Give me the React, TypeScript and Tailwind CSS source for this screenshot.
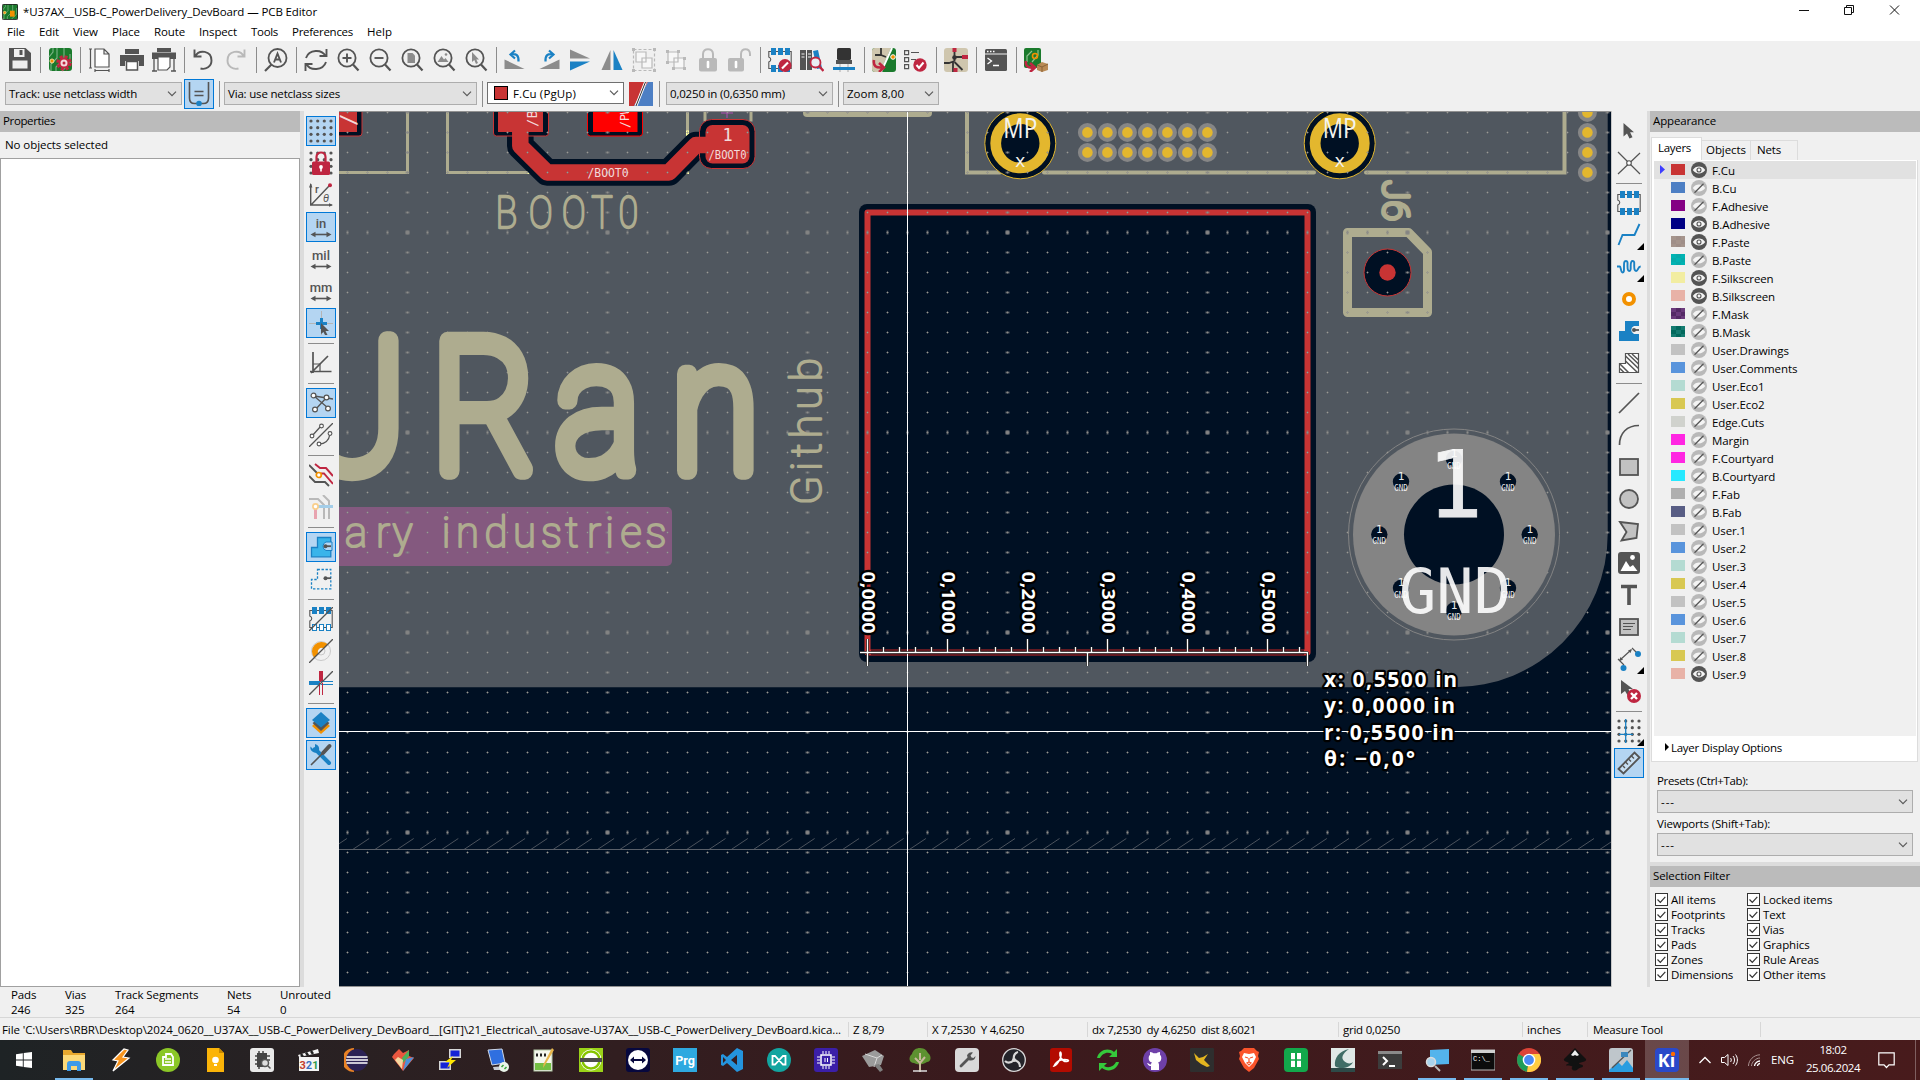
import React, { useLayoutEffect, useRef } from "react";

const D = "#545454";
const B = "#1a81c4";
const R = "#bf2641";
const O = "#f29100";
const G = "#b9b9b9";

/* Text line that can be tracked to a given width. */
function T({ w, c = "", children }: { w?: number; c?: string; children: string }) {
  const ref = useRef<HTMLSpanElement>(null);
  useLayoutEffect(() => {
    const el = ref.current;
    if (!el || !w) return;
    el.style.letterSpacing = "0px";
    const natural = el.getBoundingClientRect().width;
    el.style.letterSpacing = `${(w - natural) / children.length}px`;
  }, [w, children]);
  return (
    <span ref={ref} className={"whitespace-pre tracking-[-0.1px] " + c}>
      {children}
    </span>
  );
}

function I({ s = 24, children }: { s?: number; children: React.ReactNode }) {
  return (
    <svg width={s} height={s} viewBox="0 0 24 24" fill="none" className="block shrink-0">
      {children}
    </svg>
  );
}

/* ---------- shared icon parts ---------- */
const Lens = ({ children }: { children?: React.ReactNode }) => (
  <I>
    <circle cx="11" cy="10" r="8.600" stroke={D} strokeWidth="1.800" />
    <path d="M17 16.500l5.500 6" stroke={D} strokeWidth="2.200" />
    {children}
  </I>
);
const Cell = ({ children }: { children: React.ReactNode }) => (
  <div className="flex h-8 w-8 shrink-0 items-center justify-center">{children}</div>
);
const VSep = () => (
  <div className="flex w-2 shrink-0 justify-center">
    <div className="h-[26px] w-px bg-[#8c8c8c]" />
  </div>
);
const Footprint = ({ children }: { children?: React.ReactNode }) => (
  <I>
    <path d="M2 3.500H.8V9c2.600 1 2.600 4 0 5v6.500h22.400V3.500z" stroke={D} strokeWidth="1.100" />
    {[3, 10, 17].map((x) => (
      <g key={x} fill={B}>
        <rect x={x} y="0" width="5" height="7" />
        <rect x={x} y="17" width="5" height="7" />
      </g>
    ))}
    {children}
  </I>
);
const BoardBg = () => (
  <>
    <rect x="1" width="23" height="23" rx="3" fill="#1a7a2c" />
    <path d="M3 23V16l6-6V0M8 23v-4l8-8V0M1 9l4-5V0M14 23l8-8V6" stroke="#7fb58a" strokeWidth="1.100" />
    <circle cx="4" cy="13" r="2" fill={O} stroke="#f7dca0" />
  </>
);

const topGroups: React.ReactNode[][] = [
  [
    <I>
      <path d="M1 0h16.500L23 5v18H1z" fill={D} />
      <rect x="6" y="1" width="10.500" height="8" fill="#f0f0f0" />
      <rect x="11.500" y="2" width="3" height="5" fill={D} />
      <rect x="4.500" y="12.500" width="15" height="8" fill="#f0f0f0" />
    </I>,
  ],
  [
    <I>
      <BoardBg />
      <circle cx="16" cy="15" r="5.500" stroke={R} strokeWidth="4.600" strokeDasharray="2.600 1.700" />
      <circle cx="16" cy="15" r="4.500" fill="#f3d9de" stroke={R} strokeWidth="2" />
      <circle cx="16" cy="15" r="1.500" fill={R} />
    </I>,
  ],
  [
    <I>
      <path d="M7 1h9l5 5v13H7zM16 1v5h5" stroke={D} strokeWidth="1.200" fill="#fff" />
      <path d="M2.500 1v19M1 1h3M1 20h3M7 22.500h14M7 21v3M21 21v3" stroke={D} strokeWidth="1.200" />
    </I>,
    <I>
      <path d="M5 1h14v5H5zM0 7h24v11h-5v-5H5v5H0z" fill={D} />
      <path d="M6.500 13.500h11V22h-11z" fill="#fff" stroke={D} strokeWidth="1.500" />
    </I>,
    <I>
      <path d="M5 0h14v4H5zM0 4.500h24V11H0z" fill={D} />
      <path d="M2 11v12M22 11v12M0 23h5M19 23h5" stroke={D} strokeWidth="1.300" />
      <path d="M6 9h12v10l-3 3H6z" fill="#fff" stroke={D} strokeWidth="1.200" />
    </I>,
  ],
  [
    <I>
      <path d="M2.500 1.500v7h7M3 8.500C7 1 19.500 2.500 19.500 12.500c0 6-5.500 9.500-11 8" stroke={D} strokeWidth="1.900" />
    </I>,
    <I>
      <path d="M20.500 1.500v7h-7M20 8.500C16 1 3.500 2.500 3.500 12.500c0 6 5.500 9.500 11 8" stroke={G} strokeWidth="1.900" />
    </I>,
  ],
  [
    <I>
      <circle cx="13.500" cy="10" r="9" stroke={D} strokeWidth="1.800" />
      <path d="M7.500 16.500L1 23" stroke={D} strokeWidth="2.200" />
      <path d="M10 14.500l3.500-9 3.500 9M11 11.500h5" stroke={D} strokeWidth="1.900" />
    </I>,
  ],
  [
    <I>
      <path d="M22.500 1v7h-7M21.500 8C18 1 5 1 2 10M1.500 23v-7h7M2.500 16c3.500 7 16.500 7 19.500-2" stroke={D} strokeWidth="1.900" />
    </I>,
    <Lens>
      <path d="M11 5.500v9M6.500 10h9" stroke={D} strokeWidth="1.900" />
    </Lens>,
    <Lens>
      <path d="M6.500 10h9" stroke={D} strokeWidth="1.900" />
    </Lens>,
    <Lens>
      <path d="M7.500 5h5l2.500 2.500V15H7.500z" fill="#8c8c8c" />
    </Lens>,
    <Lens>
      <path d="M5.500 14l4-6 2.500 3.500 1.500-1.500 3 4z" fill="#8c8c8c" />
      <circle cx="14" cy="6.500" r="1.300" fill="#8c8c8c" />
    </Lens>,
    <Lens>
      <path d="M8 4v10l2.300-2 1.700 4 2-1-1.700-3.600H15z" fill="#8c8c8c" />
    </Lens>,
  ],
  [
    <I>
      <path d="M.5 11.500v9.500h20z" fill="#8c8c8c" />
      <path d="M7 6.500c5-1.500 8 1 7.500 7M11 2.500L6.500 6.500l4.500 4" stroke={B} strokeWidth="2.200" />
    </I>,
    <I>
      <path d="M23.500 11.500v9.500h-20z" fill="#8c8c8c" />
      <path d="M17 6.500c-5-1.500-8 1-7.500 7M13 2.500l4.500 4-4.500 4" stroke={B} strokeWidth="2.200" />
    </I>,
    <I>
      <path d="M2 1.500v9h20z" fill="#8c8c8c" />
      <path d="M2 22.500v-9h20z" fill={B} />
    </I>,
    <I>
      <path d="M1.500 22h9V2z" fill="#8c8c8c" />
      <path d="M22.500 22h-9V2z" fill={B} />
    </I>,
    <I>
      <rect x="1.500" y="1.500" width="21" height="21" stroke={G} strokeWidth="1.200" strokeDasharray="3 2" />
      <path d="M4 4h10v10H4zM10 10h10v10H10z" fill="#f7f7f7" stroke={G} strokeWidth="1.200" />
      <path d="M0 0h3v3H0zM21 0h3v3h-3zM0 21h3v3H0zM21 21h3v3h-3z" fill={G} />
    </I>,
    <I>
      <path d="M4 4h10v10H4zM10 10h10v10H10z" fill="#f7f7f7" stroke={G} strokeWidth="1.200" />
      <path d="M2 2h3v3H2zM13 2h3v3h-3zM2 13h3v3H2zM19 9h3v3h-3zM8 19h3v3H8zM19 19h3v3h-3z" fill={G} />
    </I>,
    <I>
      <path d="M7 10V6c0-6.500 10-6.500 10 0v4" stroke={G} strokeWidth="2" />
      <rect x="3" y="10" width="18" height="13.500" rx="2" fill={G} />
      <path d="M12 14v5" stroke="#fff" strokeWidth="2.600" strokeLinecap="round" />
    </I>,
    <I>
      <path d="M13 10V6c0-6.500 9-6.500 9 0v2" stroke={G} strokeWidth="2" />
      <rect x="0" y="10" width="16" height="13.500" rx="2" fill={G} />
      <path d="M8 14v5" stroke="#fff" strokeWidth="2.600" strokeLinecap="round" />
    </I>,
  ],
  [
    <Footprint>
      <circle cx="17" cy="17.500" r="6.500" fill={R} />
      <path d="M14 20.500l6-6" stroke="#fff" strokeWidth="2.200" />
    </Footprint>,
    <I>
      <path d="M0 2h6v20H0zM7 2h5v20H7z" fill={D} />
      <path d="M1.500 6h3M8 6h3M1.500 9h3M8 9h3" stroke="#eee" />
      <path d="M13 3l5-1 4 18-5 1z" fill={B} />
      <circle cx="15.500" cy="14.500" r="5" fill="#e9eef2" stroke={R} strokeWidth="1.800" />
      <path d="M19 18l4.500 5" stroke={R} strokeWidth="2.400" />
    </I>,
    <I>
      <rect x="5" y="0" width="14" height="12" rx="1.500" fill="#333" />
      <rect x="4" y="12" width="16" height="4" fill={D} />
      <path d="M8 16v8M16 16v8" stroke={G} strokeWidth="1.300" />
      <rect x="1" y="19" width="22" height="3" fill={B} />
    </I>,
  ],
  [
    <I>
      <rect width="24" height="24" rx="3" fill="#1a7a2c" />
      <path d="M3 0h16L8 24H3a3 3 0 01-3-3V3a3 3 0 013-3z" fill="#cfc6ae" />
      <path d="M3 7h6V0M9 7l5 2" stroke="#333" strokeWidth="1.800" />
      <path d="M20 0L9 24" stroke="#fff" strokeWidth="2" />
      <circle cx="21" cy="9" r="2.300" fill={O} stroke="#fff" strokeWidth="1" />
      <path d="M2 12c-1 6 2 8 8 7.500M7 15l5 4.500L7 24" stroke={R} strokeWidth="2.600" />
    </I>,
    <I>
      <path d="M.6 2.600h4v4h-4zM.6 9.600h4v4h-4zM.6 16.600h4v4h-4zM7 4.500h8M7 11.500h5" stroke={D} strokeWidth="1.200" />
      <circle cx="16" cy="17" r="6.700" fill={R} />
      <path d="M12.500 17l2.500 3 4.500-5.500" stroke="#fff" strokeWidth="2" />
    </I>,
  ],
  [
    <I>
      <rect width="24" height="24" rx="3" fill="#cfc6ae" />
      <path d="M10.500 3v10M10.500 9H22M10.500 13L5 15H0M9 13v11M10.500 14l8 8" stroke="#333" strokeWidth="1.800" />
      <path d="M8.500 0h4v4h-4zM18 7h6v4h-6zM9.500 20h4v4h-4z" fill={R} />
      <circle cx="10.500" cy="9.500" r="2.300" fill="#333" />
    </I>,
  ],
  [
    <I>
      <rect x="1" y="1" width="22" height="22" rx="1.500" fill={D} />
      <path d="M1 6h22" stroke="#f0f0f0" />
      <path d="M3 3.500h1.500M6 3.500h1.500M9 3.500h1.500" stroke="#fff" strokeWidth="1.500" />
      <path d="M3.500 10l4 3-4 3M9 17.500h6" stroke="#fff" strokeWidth="1.300" />
    </I>,
  ],
  [
    <I>
      <rect x="0" y="0" width="17" height="20" rx="2" fill="#1a7a2c" />
      <path d="M3 14V8l5-5M8 14l6-7V2" stroke="#8fc08f" strokeWidth="1.200" />
      <circle cx="11" cy="8" r="2.500" stroke={O} strokeWidth="1.600" />
      <path d="M2 13c-1 5 2 7 7 6.500M6 15l5 4.500L6 24" stroke={R} strokeWidth="2.600" />
      <path d="M13 17l5-3 6 2v6l-6 2-5-2z" fill="#b98a55" />
      <path d="M13 17l5 2 6-3M18 19v5" stroke="#8a6236" />
    </I>,
  ],
];

const Dots = () => (
  <>
    {[2, 8.700, 15.300, 22].map((x) =>
      [2, 8.700, 15.300, 22].map((y) => <circle key={x + "-" + y} cx={x} cy={y} r="1.600" fill={D} />)
    )}
  </>
);
const UnitIcon = ({ t }: { t: string }) => (
  <I>
    <text x="12" y="12.500" textAnchor="middle" fontSize="13" fontWeight="500" fill={D} fontFamily="Roboto">
      {t}
    </text>
    <path d="M4 19.500h16" stroke={D} strokeWidth="1.600" />
    <path d="M1.500 19.500l5-2.800v5.600zM22.500 19.500l-5-2.800v5.600z" fill={D} />
  </I>
);

type Tool = { n: React.ReactNode; on?: boolean; more?: boolean } | "sep";
const leftTools: Tool[] = [
  { n: <I><Dots /></I>, on: true },
  {
    n: (
      <I>
        <Dots />
        <path d="M7.500 11V6c0-6 9-6 9 0v5" stroke={R} strokeWidth="2.200" />
        <rect x="3" y="10.500" width="18" height="13.500" rx="1.500" fill={R} />
        <circle cx="12" cy="16" r="1.900" fill="#fff" />
        <path d="M12 16v4.500" stroke="#fff" strokeWidth="1.600" />
      </I>
    ),
  },
  {
    n: (
      <I>
        <path d="M1.700 1v21h21M2 22L20 3" stroke={D} strokeWidth="1.400" />
        <path d="M0 4.500L1.700 0l1.700 4.500zM20 20.300l4 1.700-4 1.700z" fill={D} />
        <circle cx="21" cy="2.300" r="2" fill={R} />
        <text x="6" y="10" fontSize="11" fill={D} fontFamily="Roboto" fontWeight="500">r</text>
        <text x="14" y="19" fontSize="11" fill={D} fontFamily="Roboto" fontStyle="italic">θ</text>
      </I>
    ),
  },
  { n: <UnitIcon t="in" />, on: true },
  { n: <UnitIcon t="mil" /> },
  { n: <UnitIcon t="mm" /> },
  {
    n: (
      <I>
        <path d="M12.500 0v24M0 12.500h24" stroke="#b5b5b5" strokeWidth="1" />
        <path d="M12.500 7v11M7 12.500h11" stroke={B} strokeWidth="3" />
        <path d="M12 12v11l2.500-2 2 4 2-1-2-4h3.500z" fill={D} />
      </I>
    ),
    on: true,
  },
  "sep",
  {
    n: (
      <I>
        <path d="M4 1v21M1 20.500h21.500M2 22L19 5" stroke={D} strokeWidth="1.700" />
        <path d="M4 13h7v7" stroke={D} strokeWidth="1.200" />
      </I>
    ),
  },
  "sep",
  {
    n: (
      <I>
        <path d="M5 5l14 12M18 6L6 19M5 5l13 2 6 1" stroke={D} strokeWidth="1.300" />
        {[[4.500, 4.500], [17.500, 6.500], [6, 18.500], [19, 17.500]].map(([x, y]) => (
          <circle key={x} cx={x} cy={y} r="2.400" fill="#fff" stroke={D} strokeWidth="1.200" />
        ))}
      </I>
    ),
    on: true,
  },
  {
    n: (
      <I>
        <path d="M24 0L0 24M3 13l9-10M10 21c7 0 10-4 11-10" stroke={D} strokeWidth="1.300" />
        {[[12.500, 3], [3, 13], [21, 10.500], [10, 21]].map(([x, y]) => (
          <circle key={x} cx={x} cy={y} r="1.900" fill="#fff" stroke={D} strokeWidth="1.100" />
        ))}
      </I>
    ),
  },
  "sep",
  {
    n: (
      <I>
        <path d="M6 1l5 4h6l7 8M12 10.500h3l9 10.500" stroke={R} strokeWidth="1.900" />
        <path d="M0 2l8 8M0 13l6 6h10l4 4" stroke={D} strokeWidth="1.900" />
        <circle cx="9.800" cy="12" r="2.500" fill="#fff" stroke={O} strokeWidth="1.700" />
      </I>
    ),
  },
  {
    n: (
      <I>
        <path d="M0 4h9l6 6v14M14 0l6 6v18" stroke={G} strokeWidth="2" />
        <path d="M6.500 12v12" stroke="#e8a3af" strokeWidth="3" />
        <path d="M8 11.500h16" stroke="#a3cde8" strokeWidth="3" />
        <circle cx="6.500" cy="11.500" r="2.600" fill="#fff" stroke="#f9cf8c" strokeWidth="1.700" />
      </I>
    ),
  },
  "sep",
  {
    n: (
      <I>
        <path d="M8.500 2.500h13.300v19.300H2.500V12.500h6z" fill="#39b4ea" stroke={B} strokeWidth="1.300" />
        <path d="M23 7h-6a4.500 4.500 0 000 8.500h6z" fill="#b4d8f5" stroke={B} />
        <circle cx="16.500" cy="11.200" r="2" fill={D} />
        <path d="M16.500 11.200H22" stroke={D} strokeWidth="1.800" />
      </I>
    ),
    on: true,
  },
  {
    n: (
      <I>
        <path d="M8.500 2.500h13.300v19.300H2.500V12.500h6z" stroke={B} strokeWidth="1.300" strokeDasharray="2.400 1.600" />
        <circle cx="16.500" cy="11.200" r="2" fill={D} />
        <path d="M16.500 11.200H22" stroke={D} strokeWidth="1.800" />
      </I>
    ),
  },
  "sep",
  {
    n: (
      <I>
        <path d="M2 3.500H.8V9c2.600 1 2.600 4 0 5v6.500h22.400V3.500z" stroke={D} strokeWidth="1.100" />
        {[3, 10, 17].map((x) => (
          <g key={x}>
            <rect x={x} y="0" width="5" height="7" fill={B} />
            <rect x={x + 0.500} y="17.500" width="4" height="6" fill="#fff" stroke={B} />
          </g>
        ))}
        <path d="M24 0L0 24" stroke={D} strokeWidth="1.300" />
      </I>
    ),
  },
  {
    n: (
      <I>
        <circle cx="12" cy="12" r="9.500" stroke="#c9c9c9" strokeWidth="1" />
        <circle cx="12" cy="12" r="4" stroke="#c9c9c9" />
        <path d="M5.300 18.700A9.500 9.500 0 0118.700 5.300l-4 4A4 4 0 009.300 14.700z" fill={O} />
        <path d="M24 0L0 24" stroke={D} strokeWidth="1.300" />
      </I>
    ),
  },
  {
    n: (
      <I>
        <path d="M12 0v11" stroke={R} strokeWidth="4" />
        <path d="M0 12h11" stroke={B} strokeWidth="4" />
        <path d="M12 10.500h12M12 13.500h12" stroke={B} />
        <path d="M10.500 12v12M13.500 12v12" stroke={R} />
        <path d="M24 0L0 24" stroke={D} strokeWidth="1.300" />
      </I>
    ),
  },
  "sep",
  {
    n: (
      <I>
        <path d="M3 15l9 8 9-8-3-3-6 5-6-5z" fill={O} />
        <path d="M3.500 12l8.500 8 8.500-8-3-2-5.500 5-5.500-5z" fill={D} />
        <path d="M12 1l9 8-9 7.500L3 9z" fill={B} />
      </I>
    ),
    on: true,
  },
  {
    n: (
      <I>
        <path d="M6 6l14 14" stroke={B} strokeWidth="4" strokeLinecap="round" />
        <path d="M1.500 3.500a5 5 0 008 5A5 5 0 006 1v4l-2 1z" fill={B} />
        <path d="M2 22L14 10" stroke={D} strokeWidth="1.600" />
        <path d="M14 10l6.500-7" stroke={D} strokeWidth="4" strokeLinecap="round" />
      </I>
    ),
    on: true,
  },
];

const rightTools: Tool[] = [
  {
    n: (
      <I>
        <path d="M6.500 4v13.500l3.500-3 2.500 5 3-1.300-2.400-5H17z" fill={D} />
      </I>
    ),
  },
  {
    n: (
      <I>
        <path d="M1 1l22 22M23 2L1 23" stroke={D} strokeWidth="1.200" />
        <circle cx="12" cy="12" r="2.300" fill="#fff" stroke={D} strokeWidth="1.100" />
      </I>
    ),
  },
  "sep",
  { n: <Footprint /> },
  {
    n: (
      <I>
        <path d="M1.500 22L5.500 12h12L22.500 1" stroke={B} strokeWidth="1.900" />
      </I>
    ),
    more: true,
  },
  {
    n: (
      <I>
        <path
          d="M0 11.500h3c.8 0 .8 6 2.500 6s1.500-2 1.500-6 0-5.500 2-5.500 1.500 2 1.500 5 0 5 1.700 5 1.500-2 1.500-5 0-5 2-5 1.500 2 1.500 5 0 5 2 5 1.500-4.500 4.500-4.500"
          stroke={B}
          strokeWidth="1.900"
        />
      </I>
    ),
    more: true,
  },
  {
    n: (
      <I>
        <circle cx="12" cy="12" r="5" fill="#fff" stroke={O} strokeWidth="4" />
      </I>
    ),
  },
  {
    n: (
      <I>
        <path d="M8 2h14v20H2V12h6z" fill={B} />
        <path d="M22 7h-5a4.300 4.300 0 000 8h5z" fill="#f0f0f0" />
        <circle cx="17" cy="11" r="2" fill={D} />
        <path d="M17 11h5" stroke={D} strokeWidth="1.800" />
      </I>
    ),
  },
  {
    n: (
      <I>
        <path d="M8.500 2.500h13v19h-19v-9h6z" fill="#fff" stroke={D} strokeWidth="1.200" />
        <path d="M3 13l8.500 8.500M3 17.500l4 4M8.500 10l12 11.500M8.500 5l13 12.500M11 3l10.500 10M15 3l6.500 6" stroke={D} strokeWidth="1.500" />
      </I>
    ),
  },
  "sep",
  {
    n: (
      <I>
        <path d="M2 22L22 2" stroke={D} strokeWidth="1.700" />
      </I>
    ),
  },
  {
    n: (
      <I>
        <path d="M2.500 22C2.500 10 10 2.500 22 2.500" stroke={D} strokeWidth="1.700" />
      </I>
    ),
  },
  {
    n: (
      <I>
        <rect x="3" y="4" width="18" height="16" fill="#c2c2c2" stroke={D} strokeWidth="1.800" />
      </I>
    ),
  },
  {
    n: (
      <I>
        <circle cx="12" cy="12" r="9" fill="#c2c2c2" stroke={D} strokeWidth="1.800" />
      </I>
    ),
  },
  {
    n: (
      <I>
        <path d="M3 3l18 2-1.500 14L4.500 21.500 9.500 13z" fill="#c2c2c2" stroke={D} strokeWidth="1.800" />
      </I>
    ),
  },
  {
    n: (
      <I>
        <rect x="1" y="1" width="22" height="22" rx="3" fill={D} />
        <path d="M3.500 20L9 10l4 6 3-2 4.500 6z" fill="#fff" />
        <circle cx="15.500" cy="6.500" r="2.400" fill="#fff" />
      </I>
    ),
  },
  {
    n: (
      <I>
        <path d="M4 3.500h16M12 3v19" stroke={D} strokeWidth="3.600" />
      </I>
    ),
  },
  {
    n: (
      <I>
        <rect x="3" y="4" width="18" height="16" fill="#c2c2c2" stroke={D} strokeWidth="1.800" />
        <path d="M6 8.500h12M6 11.500h10M6 14.500h8" stroke={D} strokeWidth="1.200" />
      </I>
    ),
  },
  {
    n: (
      <I>
        <path d="M3 13L14 3M1 12l6 6M15 1l6 6" stroke={D} strokeWidth="1.200" />
        <path d="M2 14l1.500-4 2.500 2.700zM15 2l-1.500 4L11 3.500z" fill={D} />
        <circle cx="21" cy="7" r="3" fill={B} />
        <circle cx="6.500" cy="21" r="3" fill={B} />
      </I>
    ),
    more: true,
  },
  {
    n: (
      <I>
        <path d="M4 1v14l4-3 3 5 3-1.500-2.500-5.500H16z" fill={D} />
        <circle cx="17" cy="17" r="7" fill={R} />
        <path d="M14 14l6 6M20 14l-6 6" stroke="#fff" strokeWidth="2.400" />
      </I>
    ),
  },
  "sep",
  {
    n: (
      <I>
        <Dots />
        <path d="M8.700 0v24M2 15.300h14" stroke={B} strokeWidth="1.300" />
      </I>
    ),
    more: true,
  },
  {
    n: (
      <I>
        <path d="M1.500 18L17.500 1.500l5 5L6.500 22.500z" fill="#c7dff3" stroke={D} strokeWidth="1.800" />
        <path d="M8 17l-2-2M11 13.500l-3-3M14 10.500l-2-2M17 7.500l-3-3" stroke={D} strokeWidth="1.400" />
      </I>
    ),
    on: true,
  },
];

const ToolColumn = ({ tools }: { tools: Tool[] }) => (
  <div className="flex w-[35px] shrink-0 flex-col items-center bg-[#f0f0f0] pt-1 pr-px">
    {tools.map((t, i) =>
      t === "sep" ? (
        <div key={i} className="flex h-2 items-center">
          <div className="h-px w-[26px] bg-[#8c8c8c]" />
        </div>
      ) : (
        <div key={i} className="flex h-8 items-center">
          <div
            className={
              t.on
                ? "relative flex h-[30px] w-[30px] items-center justify-center border border-[#0078d7] bg-[#b4d5f2]"
                : "relative flex h-[30px] w-[30px] items-center justify-center"
            }
          >
            {t.n}
            {t.more && (
              <svg className="absolute right-0 bottom-0" width="7" height="7">
                <path d="M7 0v7H0z" fill="#000" />
              </svg>
            )}
          </div>
        </div>
      )
    )}
  </div>
);

const Chevron = () => (
  <svg width="10" height="6" viewBox="0 0 10 6" className="shrink-0">
    <path d="M1 .7l4 4 4-4" fill="none" stroke="#5a5a5a" strokeWidth="1.200" />
  </svg>
);
const Combo = ({ text, w, c }: { text: string; w?: number; c: string }) => (
  <div className={"flex shrink-0 items-center justify-between border border-[#adadad] bg-[#e1e1e1] pr-1 pl-[3px] " + c}>
    <T w={w}>{text}</T>
    <Chevron />
  </div>
);

const layers: [string, string, boolean, string?][] = [
  ["F.Cu", "#c83434", true],
  ["B.Cu", "#4d7fc4", false],
  ["F.Adhesive", "#840084", false],
  ["B.Adhesive", "#000084", true],
  ["F.Paste", "#a5948c", true, "#9f8e88"],
  ["B.Paste", "#00b3b3", false, "#06aaaa"],
  ["F.Silkscreen", "#f2eda1", true],
  ["B.Silkscreen", "#e8b2a7", true],
  ["F.Mask", "#6b3a7c", false, "#552a66"],
  ["B.Mask", "#147b70", false, "#02695d"],
  ["User.Drawings", "#c2c2c2", false],
  ["User.Comments", "#5994dc", false],
  ["User.Eco1", "#b4dbd2", false],
  ["User.Eco2", "#d8c852", false],
  ["Edge.Cuts", "#d0d2cd", false],
  ["Margin", "#ff26e2", false],
  ["F.Courtyard", "#ff26e2", false],
  ["B.Courtyard", "#26e9ff", false],
  ["F.Fab", "#afafaf", false],
  ["B.Fab", "#585d84", false],
  ["User.1", "#c2c2c2", false],
  ["User.2", "#5994dc", false],
  ["User.3", "#b4dbd2", false],
  ["User.4", "#d8c852", false],
  ["User.5", "#c2c2c2", false],
  ["User.6", "#5994dc", false],
  ["User.7", "#b4dbd2", false],
  ["User.8", "#d8c852", false],
  ["User.9", "#e8b2a7", true],
];

const Eye = ({ on }: { on: boolean }) =>
  on ? (
    <svg width="16" height="16" viewBox="0 0 16 16" className="shrink-0">
      <circle cx="8" cy="8" r="8" fill={D} />
      <path d="M1.800 8c3-4.600 9.400-4.600 12.400 0-3 4.600-9.400 4.600-12.400 0z" fill="#f4f4f4" />
      <circle cx="8" cy="8" r="2" fill="#f4f4f4" stroke={D} strokeWidth="1.100" />
    </svg>
  ) : (
    <svg width="16" height="16" viewBox="0 0 16 16" className="shrink-0">
      <circle cx="8" cy="8" r="8" fill="#b9b9b9" />
      <path d="M1.800 8c3-4.600 9.400-4.600 12.400 0-3 4.600-9.400 4.600-12.400 0z" fill="#f4f4f4" />
      <path d="M3.500 12.700l9-9" stroke={D} strokeWidth="1.300" />
    </svg>
  );

/* ---------- board canvas ---------- */
const SILK = "#aeac8f";
const NAVY = "#001023";
const CU = "#c83434";
const MONO = "'DejaVu Sans Mono', monospace";

function Grid() {
  return (
    <>
      <defs>
        <pattern id="g1" x="337" y="122" width="20" height="20" patternUnits="userSpaceOnUse">
          <rect x="9" y="10" width="3" height="1" fill="#848484" opacity="0.450" />
          <rect x="10" y="9" width="1" height="3" fill="#848484" opacity="0.450" />
          <rect x="10" y="10" width="1" height="1" fill="#9a9a94" />
        </pattern>
        <pattern id="g2" x="397" y="122" width="200" height="20" patternUnits="userSpaceOnUse">
          <rect x="8.500" y="9.500" width="4" height="2" fill="#848484" opacity="0.600" />
        </pattern>
        <pattern id="g3" x="337" y="222" width="20" height="200" patternUnits="userSpaceOnUse">
          <rect x="9.500" y="8.500" width="2" height="4" fill="#848484" opacity="0.600" />
        </pattern>
        <pattern id="g4" x="397" y="222" width="200" height="200" patternUnits="userSpaceOnUse">
          <rect x="8.500" y="8.500" width="4" height="4" fill="#848484" opacity="0.850" />
        </pattern>
      </defs>
      {["g1", "g2", "g3", "g4"].map((g) => (
        <rect key={g} x="339" y="112" width="1272" height="874" fill={`url(#${g})`} />
      ))}
    </>
  );
}

const MountPad = ({ x }: { x: number }) => (
  <g>
    <circle cx={x} cy="143.300" r="35.500" fill={NAVY} stroke="#e3b72e" strokeWidth="1" />
    <circle cx={x} cy="143.300" r="24.600" fill="none" stroke="#e3b72e" strokeWidth="10.800" />
  </g>
);
const MountLabel = ({ x }: { x: number }) => (
  <g fill="#f4f4f0" fontFamily="'Open Sans'" textAnchor="middle">
    <text x={x} y="138.300" fontSize="27.500" textLength="34" lengthAdjust="spacingAndGlyphs">MP</text>
    <text x={x} y="166.500" fontSize="19">x</text>
  </g>
);

const vias: [number, number][] = [];
for (let i = 0; i < 7; i++) {
  vias.push([1087.400 + 20 * i, 132.400], [1087.400 + 20 * i, 152.400]);
}
for (let i = 0; i < 4; i++) vias.push([1587.400, 112.400 + 20 * i]);

const gndHoles: [number, number][] = [
  [1454, 459],
  [1401, 481.700],
  [1508, 481.700],
  [1379.300, 534.500],
  [1529.700, 534.500],
  [1401, 588],
  [1508, 588],
  [1454, 610.500],
];

const outlined = {
  fill: "#fff",
  stroke: "#000",
  strokeWidth: 4.400,
  strokeLinejoin: "round" as const,
  paintOrder: "stroke" as const,
};

const hatch = Array.from({ length: 59 }, (_, i) => 330.400 + i * 22.270)
  .map((x) => `M${x.toFixed(1)} 849.500l16.500-11`)
  .join("");

const rulerPath =
  "M860 652.500H1308" +
  Array.from({ length: 28 }, (_, i) => `M${867.500 + i * 16} 652V${i % 5 ? 647 : 639}`).join("") +
  "M867.500 652V666M1087.500 652V666M1307.500 652V666";

const readout: [string, number, number][] = [
  ["x: 0,5500 in", 686.500, 133],
  ["y: 0,0000 in", 713, 131],
  ["r: 0,5500 in", 739.500, 130],
  ["θ: −0,0°", 766, 91],
];

function Board() {
  return (
    <svg width="1272" height="874" viewBox="339 112 1272 874" className="block shrink-0">
      <rect x="339" y="112" width="1272" height="874" fill={NAVY} />
      <path d="M339 112H1607.700V534A153.300 153.300 0 011454.300 687.300H339z" fill="#50575f" />

      {/* silkscreen outlines */}
      <g fill="none" stroke={SILK} strokeWidth="3">
        <path d="M339 172.400H407.500V112M447.500 112V172.400H687.500V112M705 112v9.500M751 112v9.500" />
        <path d="M967 112V172.400H1000M1044 172.400H1314M1366 172.400H1564.500V112" strokeWidth="4" strokeLinecap="round" />
      </g>
      <path d="M527 172.400h12M678 172.400h9.500v-42" stroke="#ffffa3" strokeWidth="3" fill="none" />
      <rect x="803" y="100" width="129" height="17" rx="4" fill={SILK} />
      <path d="M721 113h12M727 112v6" stroke="#b04fb4" />

      {/* pads along the top edge */}
      <rect x="320" y="90" width="42" height="46" rx="3" fill={NAVY} stroke={CU} strokeWidth="1" />
      <rect x="320" y="90" width="37" height="42" fill={CU} />
      <path d="M520.300 130V146L547 172.400H669L696 145H712" fill="none" stroke={NAVY} strokeWidth="26.600" strokeLinejoin="round" />
      <rect x="493.500" y="90" width="55" height="46" rx="3" fill={NAVY} stroke={CU} strokeWidth="1" />
      <rect x="498" y="90" width="45" height="42" fill={CU} />
      <rect x="587.500" y="90" width="55" height="46" rx="3" fill={NAVY} stroke="#f00" strokeWidth="1" />
      <rect x="593" y="90" width="44.500" height="42" fill="#f00" />
      <rect x="699.500" y="119.500" width="55.500" height="49" rx="12" fill={NAVY} stroke={CU} strokeWidth="1" />
      <rect x="705.500" y="125" width="44" height="38.500" rx="7" fill={CU} />
      <path d="M520.300 130V146L547 172.400H669L696 145H712" fill="none" stroke={CU} strokeWidth="16.500" strokeLinejoin="round" />

      <rect x="329" y="507" width="343" height="59" rx="5" fill="#84597f" />

      {/* square outline */}
      <rect x="859" y="204" width="457" height="458" rx="8" fill={NAVY} />
      <rect x="867.500" y="212.500" width="440" height="440" fill="none" stroke={CU} strokeWidth="6" strokeLinejoin="round" />
      <path d="M871 652.500H1304" stroke="#641a22" strokeWidth="7" />

      {/* test point */}
      <path d="M1347.500 232.500H1408.500L1427.500 252V312.500H1347.500z" fill="none" stroke={SILK} strokeWidth="9" strokeLinejoin="round" />
      <circle cx="1387.500" cy="272.500" r="23.500" fill={NAVY} stroke={CU} strokeWidth="1" />

      <MountPad x={1020.300} />
      <MountPad x={1339.700} />
      <circle cx="1454" cy="534.500" r="105.500" fill="none" stroke="#848484" strokeWidth="1" />

      <Grid />

      <circle cx="1387.500" cy="272.500" r="8.200" fill={CU} />
      {vias.map(([x, y]) => (
        <circle key={x + "-" + y} cx={x} cy={y} r="7.400" fill="#e3b72e" stroke="#868686" strokeWidth="4.200" />
      ))}
      <circle cx="1454" cy="534.500" r="101" fill="#848484" />
      <circle cx="1454" cy="534.500" r="50" fill={NAVY} />
      {gndHoles.map(([x, y]) => (
        <circle key={x + "-" + y} cx={x} cy={y} r="8.200" fill={NAVY} />
      ))}

      {/* silkscreen text */}
      <g fill={SILK} stroke={SILK} strokeLinejoin="round" fontFamily="Roboto" fontWeight="100">
        <g transform="translate(0 228) scale(0.800 1)" fontSize="45" strokeWidth="2.300">
          <text x="633 675.800 717.300 752.500 785.500" y="0" textAnchor="middle">BOOT0</text>
        </g>
        <g transform="translate(0 470) scale(0.870 1)" fontSize="182" strokeWidth="18.500">
          <text x="404.500 556.500 687 822" y="0" textAnchor="middle">URan</text>
        </g>
        <g transform="translate(0 547)" fontSize="42" strokeWidth="2.200">
          <text x="356 383 402.500 425 446 467.500 496 524.500 551.500 572 594 609.500 631 656" y="0" textAnchor="middle">
            ary industries
          </text>
        </g>
        <text transform="translate(820.500 505) rotate(-90)" fontSize="42.500" strokeWidth="2.200" textLength="147">
          Github
        </text>
        <text transform="translate(1382.500 180) rotate(90)" fontSize="37" strokeWidth="4" textLength="41">
          J6
        </text>
      </g>

      {/* net names */}
      <g fill="#f3dada" fontFamily={MONO}>
        <text transform="translate(355.500 126) rotate(-90)" fontSize="21">/BOOT0</text>
        <text transform="translate(536.500 127) rotate(-90)" fontSize="14">/BOOT0</text>
        <text transform="translate(628.500 128) rotate(-90)" fontSize="11.500">/PWR</text>
        <text x="608" y="176.500" fontSize="12" textAnchor="middle" textLength="41" lengthAdjust="spacingAndGlyphs">/BOOT0</text>
        <text x="727.500" y="159" fontSize="12" textAnchor="middle" textLength="38" lengthAdjust="spacingAndGlyphs">/BOOT0</text>
        <text x="727.500" y="141" fontSize="17" textAnchor="middle">1</text>
      </g>
      <MountLabel x={1020.300} />
      <MountLabel x={1339.700} />
      <g fill="#fff" fontFamily={MONO} textAnchor="middle">
        {gndHoles.map(([x, y]) => (
          <g key={x + "-" + y} opacity="0.900">
            <text x={x} y={y - 2} fontSize="11">1</text>
            <text x={x} y={y + 9.500} fontSize="8" textLength="13.500" lengthAdjust="spacingAndGlyphs">GND</text>
          </g>
        ))}
        <text x="1455" y="517" fontSize="93" opacity="0.900" stroke="#fff" strokeWidth="0.800">1</text>
        <text x="1455" y="613" fontSize="63" opacity="0.900" textLength="112" lengthAdjust="spacingAndGlyphs">GND</text>
      </g>

      <path d={hatch} stroke="#4b525c" fill="none" />
      <path d="M339 849.500H1611" stroke="#5a6069" />

      {/* crosshair */}
      <path d="M339 731.500H1611M907.500 112V986" stroke="#fff" />

      {/* ruler */}
      <path d={rulerPath} stroke="#000" strokeWidth="3" opacity="0.800" />
      <path d={rulerPath} stroke="#fff" strokeWidth="1.400" />
      <g fontFamily="'Open Sans'" fontWeight="700" fontSize="18">
        {["0,0000", "0,1000", "0,2000", "0,3000", "0,4000", "0,5000"].map((s, i) => (
          <text
            key={s}
            transform={`translate(${861.500 + i * 80} 571.500) rotate(90)`}
            textLength="62"
            lengthAdjust="spacingAndGlyphs"
            {...outlined}
          >
            {s}
          </text>
        ))}
      </g>
      <g fontFamily="'Open Sans'" fontWeight="700" fontSize="21">
        {readout.map(([s, y, w]) => (
          <text key={s} x="1324" y={y} textLength={w} {...outlined}>
            {s}
          </text>
        ))}
      </g>
    </svg>
  );
}

/* ---------- taskbar icons ---------- */
const taskIcons: React.ReactNode[] = [
  <I><path d="M1 2h8l2 3h12v17H1z" fill="#e8a82e" /><path d="M1 7h22v15H1z" fill="#fcd978" /><path d="M5 23v-7c0-2 1-3 3-3h8c2 0 3 1 3 3v7h-4v-5H9v5z" fill="#3f9be8" /></I>,
  <I><path d="M15 1L4 12l5 1-5 10L20 10l-6-1 5-7z" fill="#f7941d" stroke="#fff" strokeWidth="1.200" /></I>,
  <I><circle cx="12" cy="12" r="12" fill="#8bc727" /><path d="M7 17V9h3V6h5l2 3v8z" fill="none" stroke="#fff" strokeWidth="1.800" /><path d="M9 11h6M9 14h6" stroke="#fff" strokeWidth="1.500" /></I>,
  <I><path d="M4 0h12l5 5v19H4z" fill="#fbb408" /><path d="M16 0l5 5h-5z" fill="#c98900" /><circle cx="12.500" cy="12" r="3.300" fill="#fff" /><path d="M11 17h3" stroke="#fff" strokeWidth="2" /></I>,
  <I><rect width="24" height="24" rx="3" fill="#e9e9e9" /><rect x="7" y="5" width="10" height="14" fill="#444" /><path d="M5 8h2M5 12h2M5 16h2M17 8h3M17 12h3M9 3v2M13 3v2M9 19v2" stroke="#444" strokeWidth="1.500" /><circle cx="15" cy="15" r="3.500" fill="#ddd" stroke="#555" strokeWidth="1.500" /><path d="M17.500 17.500l3 3" stroke="#555" strokeWidth="1.500" /></I>,
  <I><path d="M1 7l20-6 1 4L2 9z" fill="#f5f5f5" /><path d="M4 6l2 3M9 4.500l2 3M14 3l2 3" stroke="#222" strokeWidth="2.400" /><rect x="2" y="9" width="20" height="14" fill="#f4f4f4" /><text x="12" y="20.500" textAnchor="middle" fontSize="11" fontWeight="700" fontFamily="Roboto"><tspan fill="#c33d2c">3</tspan><tspan fill="#3a70c0">2</tspan><tspan fill="#2f9a4a">1</tspan></text></I>,
  <I><path d="M10 0a12 12 0 000 24" fill="#e98225" /><circle cx="13" cy="12" r="11" fill="#2c2255" /><path d="M2.500 9h21M2 12h22M2.500 15h21" stroke="#fff" strokeWidth="1.500" /></I>,
  <I><path d="M3 6l5-5 4 4 6-3v6l5 2-11 13L1 9z" fill="#e9573f" /><path d="M18 2l-7 8 1 5 6-7z" fill="#4bb05a" /><path d="M23 9l-8 2-3 12z" fill="#4a90d9" /><path d="M7 9l5 3-1 9-7-9z" fill="#f5d7a0" /></I>,
  <I><rect x="11" y="1" width="12" height="9" fill="#d7d7d7" /><rect x="12.500" y="2.500" width="9" height="6" fill="#1522d8" /><rect x="1" y="13" width="12" height="9" fill="#d7d7d7" /><rect x="2.500" y="14.500" width="9" height="6" fill="#1522d8" /><path d="M15 8l-8 6h5l-3 6 9-8h-5z" fill="#ffe600" /></I>,
  <I><path d="M3 2l14-1 3 14-13 2z" fill="#2f6fe0" stroke="#cfd8e6" /><path d="M8 19l12-1 2 4H9z" fill="#c8ccd2" /><circle cx="19" cy="19" r="5" fill="#e9f4e9" /><path d="M16.500 19l2-2M19.500 21l2-2" stroke="#37a33c" strokeWidth="1.500" /></I>,
  <I><rect x="2" y="2" width="18" height="21" fill="#f4f7ee" stroke="#b5c9a8" strokeWidth="1" /><path d="M4 7h2M8 7h2M12 7h2" stroke="#222" strokeWidth="3" /><rect x="3" y="15" width="16" height="7" fill="#73bf43" /><path d="M22 2l-9 15-2 3 .5-4L20 0z" fill="#e8b64c" /></I>,
  <I><rect width="24" height="24" fill="#9bd318" /><circle cx="12" cy="12" r="10.500" fill="#fff" /><circle cx="12" cy="12" r="8.500" stroke="#86c500" strokeWidth="2.500" fill="#fff" /><rect x="1" y="10" width="22" height="4" fill="#4d4d4d" /></I>,
  <I><rect width="24" height="24" rx="3" fill="#07083e" /><circle cx="12" cy="12" r="10" fill="#fff" /><path d="M4 12l4-3.500v2.500h8V8.500l4 3.500-4 3.500V13H8v2.500z" fill="#07083e" /></I>,
  <I><rect width="24" height="24" fill="#2ea9e0" /><text x="12" y="16.500" textAnchor="middle" fontSize="12.500" fontWeight="700" fill="#fff" fontFamily="Roboto">Prg</text></I>,
  <I><path d="M17 0l6 3v18l-6 3-10-9-4 3-2-1v-10l2-1 4 3zM17 7l-6 5 6 5zM3 9v6l3-3z" fill="#2494dd" fillRule="evenodd" /></I>,
  <I><circle cx="12" cy="12" r="12" fill="#12a5a0" /><path d="M5.500 16.500V8H8l8 8.500h2.500V8H16L8 16.500z" stroke="#fff" strokeWidth="1.800" fill="none" /></I>,
  <I><rect width="24" height="24" rx="3" fill="#3b1fa8" /><rect x="7" y="7" width="10" height="10" fill="none" stroke="#fff" strokeWidth="1.500" /><path d="M9 3v3M12 3v3M15 3v3M9 18v3M12 18v3M15 18v3M3 9h3M3 12h3M3 15h3M18 9h3M18 12h3M18 15h3M11 10v4M13.500 10v4" stroke="#fff" /></I>,
  <I><path d="M1 8l13-6 9 6-3 9-12 2z" fill="#9b9b9b" /><path d="M4 6l12 4 5-3M16 10l-3 9" stroke="#d9d9d9" fill="none" /><path d="M13 17l5-1 4 6-3 2z" fill="#7f7f7f" /></I>,
  <I><path d="M12 0c5 0 7 3 8 5 4 3 3 9-1 9-4 3-10 3-13 1C1 15 0 9 4 6c1-4 4-6 8-6z" fill="#5d9130" /><path d="M12 24v-9l-5-5M12 15l5-6M12 12V5" stroke="#c7b89a" strokeWidth="2" fill="none" /><path d="M5 23h14" stroke="#ddd" strokeWidth="1.500" /></I>,
  <I><rect width="24" height="24" rx="4" fill="#d9d9d9" /><path d="M6 18l8-8" stroke="#555" strokeWidth="2.800" strokeLinecap="round" /><path d="M12 7.500a4.500 4.500 0 016-3l-2.500 3 1 2 2 .5 2-2c0 4-4 5.500-7 4z" fill="#555" /></I>,
  <I><circle cx="12" cy="12" r="11.300" fill="#24242a" stroke="#d8d8d8" strokeWidth="1.300" /><path d="M12 12c-1-5 1-7 4-8M12 12c5 1 6 4 6 7M12 12c-4 4-7 3-9 1" stroke="#d8d8d8" strokeWidth="2.200" fill="none" /><circle cx="12" cy="12" r="2" fill="#d8d8d8" /></I>,
  <I><rect x="1" width="22" height="24" rx="3" fill="#b30b00" /><path d="M5 18c4-1 8-10 7-13s-2 2 0 5 5 4 7 3-3-2-7-1-6 4-7 6z" fill="none" stroke="#fff" strokeWidth="1.500" /></I>,
  <I><path d="M21 1v8h-8l3-3C11 3 6 6 4 10H1C3 2 12-1 18 4z" fill="#35c93b" /><path d="M3 23v-8h8l-3 3c5 3 10 0 12-4h3c-2 8-11 11-17 6z" fill="#35c93b" /></I>,
  <I><circle cx="12" cy="12" r="12" fill="#6e40a8" /><path d="M8 22v-4c-3 0-3-2-4-3 2 0 2 2 4 1.500 0-1 .5-1.500 1-2C5 14 5 8 7 7V4c2 0 3 1 3.500 1.300h3C14 5 15 4 17 4v3c2 1 2 7-2 7.500.8.700 1 1.500 1 2.500v5z" fill="#fff" /></I>,
  <I><rect width="24" height="24" rx="1" fill="#2e2e2e" /><path d="M4 5l5 5 4-1 5-3-4 6 6 6-3 1-6-3-5-4z" fill="#e3b51f" /></I>,
  <I><path d="M7 0h10l3 3 2 1-1 4 1 3-5 9-5 4-5-4-5-9 1-3-1-4 2-1z" fill="#fb542b" /><path d="M7 5l5 1 5-1 2 4-3 6-4 4-4-4-3-6z" fill="#fff" /><path d="M8 9l3 1M16 9l-3 1M12 10v4l-2 1 2 2 2-2-2-1" stroke="#fb542b" strokeWidth="1.200" fill="none" /></I>,
  <I><rect width="24" height="24" rx="4" fill="#12a84b" /><path d="M7 5h4v14H7zM13 5h4v14h-4z" fill="#fff" /><path d="M7 12h4M13 12h4" stroke="#12a84b" strokeWidth="1.300" /></I>,
  <I><rect width="24" height="24" fill="#dfe8e6" /><path d="M4 18C3 10 8 3 18 1c-7 5-8 9-5 12s7 3 9 1c-2 6-14 8-18 4z" fill="#3f6d66" /><path d="M0 20h24v4H0z" fill="#2d4a48" /></I>,
  <I><rect y="3" width="24" height="18" fill="#3c3c3c" /><rect y="3" width="24" height="3" fill="#8a8a8a" /><path d="M5 9l4 4-4 4M11 18h6" stroke="#fff" strokeWidth="2" fill="none" /></I>,
  <I><path d="M5 2l19-1v15l-19 1z" fill="#54b4ec" /><circle cx="6" cy="14" r="4.500" fill="#a9d3ec" stroke="#dcdcdc" strokeWidth="1.500" /><path d="M10 18l5 5" stroke="#b9b9b9" strokeWidth="2" /></I>,
  <I><rect y="2" width="24" height="20" fill="#0c0c0c" stroke="#bbb" /><rect y="2" width="24" height="3" fill="#d0d0d0" /><text x="2" y="13" fontSize="7" fill="#fff" fontFamily="Liberation Mono">C:\_</text></I>,
  <I><circle cx="12" cy="12" r="12" fill="#dc4437" /><path d="M12 12L1.600 6A12 12 0 0010 23.800z" fill="#1f9d58" /><path d="M12 12l-2 11.800A12 12 0 0022.400 6H12z" fill="#ffcd42" /><circle cx="12" cy="12" r="5.600" fill="#4a8af4" stroke="#fff" strokeWidth="1.400" /></I>,
  <I><path d="M12 0l11 11c1 3-5 3-7 4 0 2 4 1 4 3s-3 1-5 3-5 2-6 0 2-2-1-3-5 0-5-1 3-1 3-2-6-1-5-4z" fill="#111" /><path d="M12 2l4 5-2 1-2-1-2 1-2-1z" fill="#eee" /></I>,
  <I><rect width="24" height="24" rx="3" fill="#bfc6cb" /><path d="M0 22l9-8 4 4 5-6 6 8v4H0z" fill="#2a9de0" /><path d="M3 20L22 2" stroke="#555" strokeWidth="1.300" /><rect x="12" y="4" width="7" height="5" fill="#3c87bd" /></I>,
  <I><rect width="24" height="24" rx="4" fill="#2a49c9" /><text x="11.500" y="19" textAnchor="middle" fontSize="18" fontWeight="700" fill="#fff" fontFamily="Open Sans">Ki</text><circle cx="18" cy="6" r="2.200" fill="#ff6a00" /></I>,
];

const stats: [string, string, string][] = [
  ["Pads", "246", "w-[54px]"],
  ["Vias", "325", "w-[50px]"],
  ["Track Segments", "264", "w-[112px]"],
  ["Nets", "54", "w-[53px]"],
  ["Unrouted", "0", "w-[60px]"],
];

const filters: [string, string][] = [
  ["All items", "Locked items"],
  ["Footprints", "Text"],
  ["Tracks", "Vias"],
  ["Pads", "Graphics"],
  ["Zones", "Rule Areas"],
  ["Dimensions", "Other items"],
];
const Check = ({ t }: { t: string }) => (
  <div className="flex h-[15px] w-[92px] items-center gap-[3px]">
    <svg width="13" height="13" viewBox="0 0 13 13" className="shrink-0">
      <rect x="0.500" y="0.500" width="12" height="12" fill="#fff" stroke="#333" />
      <path d="M2.500 6.500l2.800 2.800 5-5.500" fill="none" stroke="#333" strokeWidth="1.200" />
    </svg>
    <T>{t}</T>
  </div>
);

const menus: [string, number, string][] = [
  ["File", 18, "w-[32px]"],
  ["Edit", 20, "w-[34px]"],
  ["View", 25, "w-[39px]"],
  ["Place", 28, "w-[42px]"],
  ["Route", 31, "w-[45px]"],
  ["Inspect", 38, "w-[52px]"],
  ["Tools", 27, "w-[41px]"],
  ["Preferences", 61, "w-[75px]"],
  ["Help", 25, "w-[38px]"],
];

export default function App() {
  return (
    <div className="flex h-[1080px] w-[1920px] flex-col overflow-hidden bg-[#f0f0f0] font-['Open_Sans',sans-serif] text-[11.5px] leading-[15px] text-black">
      {/* title bar */}
      <div className="flex h-[23px] shrink-0 items-center bg-white pl-0.5">
        <svg width="16" height="16" viewBox="0 0 24 24" fill="none">
          <BoardBg />
          <rect x="0.500" y="0.500" width="23" height="23" rx="2" stroke="#222" strokeWidth="1.500" />
          <rect x="12" y="10" width="7" height="9" fill={O} />
        </svg>
        <div className="ml-[5px] grow">
          <T w={294}>*U37AX__USB-C_PowerDelivery_DevBoard — PCB Editor</T>
        </div>
        <svg width="110" height="12" viewBox="0 0 110 12" fill="none" stroke="#111" className="mr-[15px] mb-1">
          <path d="M4 6.500h10" />
          <path d="M49.500 3.500h7v7h-7zM51.500 3.500v-2h7v7h-2" />
          <path d="M95 1.500l9 9M104 1.500l-9 9" />
        </svg>
      </div>
      {/* menu bar */}
      <div className="flex h-[18px] shrink-0 items-start bg-white pt-px pl-[7px]">
        {menus.map(([m, w, c]) => (
          <div key={m} className={c}>
            <T w={w}>{m}</T>
          </div>
        ))}
      </div>
      {/* main toolbar */}
      <div className="flex h-[38px] shrink-0 items-center pl-1">
        {topGroups.map((g, i) => (
          <React.Fragment key={i}>
            {i > 0 && <VSep />}
            {g.map((n, j) => (
              <Cell key={j}>{n}</Cell>
            ))}
          </React.Fragment>
        ))}
      </div>
      {/* settings toolbar */}
      <div className="flex h-8 shrink-0 items-start pl-[5px]">
        <Combo text="Track: use netclass width" w={128} c="mt-[3px] h-[23px] w-[177px]" />
        <div className="ml-0.5 flex h-[30px] w-[30px] items-center justify-center border border-[#0078d7] bg-[#b4d5f2]">
          <I>
            <path d="M2.500 0v16c0 5 3 5.500 5 5.500h9c2 0 5-.5 5-5.500V0" stroke={D} strokeWidth="1.600" />
            <path d="M7.500 9.500h9M7.500 13.500h9" stroke={D} strokeWidth="1.300" />
            <circle cx="12" cy="21.500" r="2.800" fill={B} />
          </I>
        </div>
        <div className="mt-0.5 flex w-[10px] justify-center"><div className="h-[26px] w-px bg-[#8c8c8c]" /></div>
        <Combo text="Via: use netclass sizes" w={112} c="mt-[3px] h-[23px] w-[253px]" />
        <div className="mt-0.5 flex w-[10px] justify-center"><div className="h-[26px] w-px bg-[#8c8c8c]" /></div>
        <div className="mt-[3px] flex h-[22px] w-[137px] items-center border border-[#707070] bg-white pr-1 pl-1.5">
          <div className="mr-[5px] h-[14px] w-[14px] border border-black bg-[#c83434]" />
          <div className="grow">
            <T w={63}>F.Cu (PgUp)</T>
          </div>
          <Chevron />
        </div>
        <svg width="24" height="24" viewBox="0 0 24 24" className="mt-[3px] ml-[5px]">
          <path d="M0 0h19L5 24H0z" fill={CU} />
          <path d="M19 0h5v24H5z" fill="#4d7fc4" />
          <path d="M16.500 0L7 24" stroke="#fff" strokeWidth="2.800" />
          <path d="M16.500 0L7 24" stroke="#333" strokeWidth="1" />
        </svg>
        <div className="mt-0.5 flex w-[13px] justify-center"><div className="h-[26px] w-px bg-[#8c8c8c]" /></div>
        <Combo text="0,0250 in (0,6350 mm)" w={115} c="mt-[3px] h-[23px] w-[167px]" />
        <div className="mt-0.5 flex w-[10px] justify-center"><div className="h-[26px] w-px bg-[#8c8c8c]" /></div>
        <Combo text="Zoom 8,00" w={57} c="mt-[3px] h-[23px] w-[96px]" />
      </div>

      {/* work area */}
      <div className="flex h-[876px] shrink-0">
        <div className="flex w-[300px] shrink-0 flex-col">
          <div className="h-[21px] bg-[#bbbbbb] pt-[2px] pl-[3px]">
            <T w={52}>Properties</T>
          </div>
          <div className="h-[26px] pt-[5px] pl-[5px]">
            <T w={103}>No objects selected</T>
          </div>
          <div className="grow border border-[#a0a0a0] bg-white" />
        </div>
        <div className="w-[4px] shrink-0 bg-[#dcdcdc]" />
        <ToolColumn tools={leftTools} />
        <div className="w-[1272px] shrink-0 border-y border-[#909090]">
          <Board />
        </div>
        <div className="w-px shrink-0 bg-[#c8c8c8]" />
        <ToolColumn tools={rightTools} />
        <div className="w-[3px] shrink-0 bg-[#dcdcdc]" />
        {/* appearance */}
        <div className="flex w-[270px] shrink-0 flex-col">
          <div className="h-[21px] shrink-0 bg-[#bbbbbb] pt-[2px] pl-[3px]">
            <T w={63}>Appearance</T>
          </div>
          <div className="flex h-[28px] shrink-0 items-end pl-px">
            <div className="h-[23px] w-[51px] border border-b-0 border-[#dcdcdc] bg-white pt-[2px] pl-1.5">
              <T w={33}>Layers</T>
            </div>
            <div className="h-[20px] w-[49px] border-t border-r border-[#dcdcdc] pt-px pl-1">
              <T w={40}>Objects</T>
            </div>
            <div className="h-[20px] w-[47px] border-t border-r border-[#dcdcdc] pt-px pl-1.5">
              <T w={24}>Nets</T>
            </div>
          </div>
          <div className="ml-px flex h-[602px] w-[267px] shrink-0 flex-col border border-t-0 border-[#dcdcdc] bg-white pt-px">
            <div className="ml-[2px] h-[575px] w-[262px] bg-[#f0f0f0]">
              {layers.map(([name, col, on, alt], i) => (
                <div
                  key={name}
                  className={i === 0 ? "flex h-[18px] items-center bg-[#e1e1e1] pl-1.5" : "flex h-[18px] items-center pl-1.5"}
                >
                  <svg width="11" height="10" className="shrink-0">
                    {i === 0 && <path d="M0 0l5 4.500L0 9z" fill="#3d3dff" />}
                  </svg>
                  <svg width="14" height="11" className="mb-px shrink-0">
                    <rect width="14" height="11" fill={col} />
                    {alt && <path d="M5 0h5v4H5zM0 4h5v4H0zM10 4h4v4h-4zM5 8h5v3H5z" fill={alt} />}
                  </svg>
                  <div className="mr-[5px] ml-1.5">
                    <Eye on={on} />
                  </div>
                  <T>{name}</T>
                </div>
              ))}
            </div>
            <div className="flex h-[23px] items-center pl-[13px]">
              <svg width="6" height="8" className="mb-px">
                <path d="M0 0l4 4-4 4z" fill="#000" />
              </svg>
              <T w={111}>Layer Display Options</T>
            </div>
          </div>
          <div className="mt-[11px] pl-[7px]">
            <T w={91}>Presets (Ctrl+Tab):</T>
          </div>
          <Combo text="---" w={14} c="mt-[2px] ml-[7px] h-[23px] w-[256px]" />
          <div className="mt-[3px] pl-[7px]">
            <T w={113}>Viewports (Shift+Tab):</T>
          </div>
          <Combo text="---" w={14} c="mt-[2px] ml-[7px] h-[23px] w-[256px]" />
          <div className="mt-[6px] h-[4px] shrink-0 bg-[#dcdcdc]" />
          <div className="h-[21px] shrink-0 bg-[#bbbbbb] pt-[2px] pl-[3px]">
            <T w={77}>Selection Filter</T>
          </div>
          <div className="mt-[5px] ml-[5px] flex flex-col">
            {filters.map(([a, b]) => (
              <div key={a} className="flex">
                <Check t={a} />
                <Check t={b} />
              </div>
            ))}
          </div>
        </div>
      </div>

      {/* board statistics */}
      <div className="flex h-[31px] shrink-0 border-b border-[#d7d7d7] pl-[11px]">
        {stats.map(([a, b, c]) => (
          <div key={a} className={"flex flex-col " + c}>
            <T>{a}</T>
            <T>{b}</T>
          </div>
        ))}
      </div>
      {/* status bar */}
      <div className="flex h-[22px] shrink-0 items-center">
        <div className="w-[849px] border-r border-[#d7d7d7] pl-[2px]">
          <T w={839}>File 'C:\Users\RBR\Desktop\2024_0620__U37AX__USB-C_PowerDelivery_DevBoard__[GIT]\21_Electrical\_autosave-U37AX__USB-C_PowerDelivery_DevBoard.kica...</T>
        </div>
        <div className="w-[79px] border-r border-[#d7d7d7] pl-1"><T w={31}>Z 8,79</T></div>
        <div className="w-[160px] border-r border-[#d7d7d7] pl-1"><T w={92}>X 7,2530  Y 4,6250</T></div>
        <div className="w-[251px] border-r border-[#d7d7d7] pl-1"><T w={164}>dx 7,2530  dy 4,6250  dist 8,6021</T></div>
        <div className="w-[184px] border-r border-[#d7d7d7] pl-1"><T w={57}>grid 0,0250</T></div>
        <div className="w-[65px] border-r border-[#d7d7d7] pl-1"><T w={34}>inches</T></div>
        <div className="w-[173px] border-r border-[#d7d7d7] pl-[5px]"><T w={70}>Measure Tool</T></div>
      </div>

      {/* taskbar */}
      <div className="flex h-[40px] shrink-0 items-center bg-linear-to-r from-[#1e2325] via-[#3a1a1d] to-[#481b1c] text-white">
        <div className="flex w-[47px] justify-center">
          <svg width="16" height="16" viewBox="0 0 16 16">
            <path d="M0 2.200L6.800 1.200v6.300H0zM7.700 1.100L16 0v7.500H7.700zM0 8.400h6.800v6.400L0 13.800zM7.700 8.400H16V16l-8.300-1.100z" fill="#fff" />
          </svg>
        </div>
        <div className="ml-[3px] flex h-full w-[1640px] shrink-0">
          {taskIcons.map((n, i) => (
            <div key={i} className={i < 30 ? "flex h-full w-[47px] shrink-0 justify-center" : "flex h-full w-[46px] shrink-0 justify-center"}>
              <div
                className={
                  i === 34
                    ? "flex h-full w-[44px] items-center justify-center border-b-2 border-[#76b9ed] bg-white/20 pt-0.5"
                    : i === 0 || i > 28
                      ? "flex h-full w-[38px] items-center justify-center border-b-2 border-[#76b9ed] pt-0.5"
                      : "flex h-full w-[38px] items-center justify-center"
                }
              >
                {n}
              </div>
            </div>
          ))}
        </div>
        <div className="flex grow items-center pl-[9px]">
          <svg width="12" height="8" viewBox="0 0 12 8" fill="none" stroke="#fff" strokeWidth="1.300">
            <path d="M.5 7L6 1.500 11.500 7" />
          </svg>
          <svg width="17" height="14" viewBox="0 0 17 14" fill="none" stroke="#fff" className="ml-[10px]">
            <path d="M.5 4.500h3l3.500-3v11l-3.500-3h-3zM9.500 5c1 1 1 3 0 4M12 3c2 2 2 6 0 8M14.500 1.500c2.500 3 2.500 8 0 11" />
          </svg>
          <svg width="13" height="13" viewBox="0 0 13 13" fill="none" className="ml-[10px]">
            <path d="M.5 12C.5 6 6 .8 12 .8M3.500 12C3.500 8 8 4 12 4" stroke="#a89090" />
            <path d="M6.500 12c0-2.500 3-5 5.500-5M9.500 12c0-1.500 1.500-2.500 2.500-2.500" stroke="#fff" strokeWidth="1.300" />
          </svg>
          <div className="mb-px ml-[10px]">
            <T w={23}>ENG</T>
          </div>
          <div className="mb-1 ml-[11px] flex w-[56px] flex-col items-center gap-[3px]">
            <T w={27}>18:02</T>
            <T w={54}>25.06.2024</T>
          </div>
          <svg width="17" height="17" viewBox="0 0 17 17" fill="none" stroke="#fff" strokeWidth="1.200" className="ml-[17px]">
            <path d="M.8 .8h15.400v12H11L8.500 15.500 6 12.800H.8z" />
          </svg>
        </div>
        <div className="mr-1 h-full w-px bg-white/30" />
      </div>
    </div>
  );
}
